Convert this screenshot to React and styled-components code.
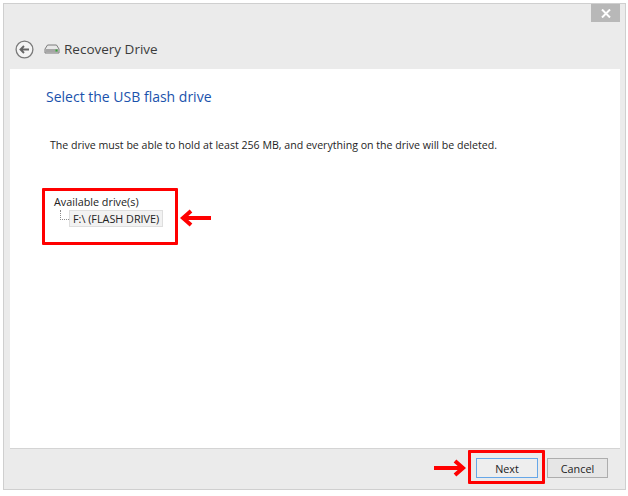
import React from "react";
import styled, { createGlobalStyle } from "styled-components";

const Global = createGlobalStyle`
  html, body { margin: 0; padding: 0; background: #fff; }
  body { width: 628px; height: 496px; overflow: hidden; font-family: "Open Sans", "Noto Sans", sans-serif; }
`;
const Page = styled.div`
  position: relative;
  width: 628px;
  height: 496px;
  padding: 3px 2px 6px 3px;
  box-sizing: border-box;
`;
const Window = styled.div`
  height: 100%;
  box-sizing: border-box;
  background: #ebebeb;
  border: 1px solid #cfcfcf;
  display: flex;
  flex-direction: column;
  padding: 0 5px 2px 6px;
`;
const TitleBar = styled.div`
  height: 19px;
  display: flex;
  justify-content: flex-end;
`;
const CloseButton = styled.div`
  width: 29px;
  height: 18px;
  background: #b8b8b8;
  display: flex;
  align-items: center;
  justify-content: center;
`;
const NavBar = styled.div`
  height: 46px;
  display: flex;
  align-items: center;
  gap: 10px;
  padding: 6px 0 0 5px;
  box-sizing: border-box;
`;
const AppTitle = styled.div`
  display: flex;
  align-items: center;
  gap: 4px;
  font-size: 13.5px;
  color: #3c3c3c;
`;
const Content = styled.div`
  flex: 1;
  background: #fff;
  padding: 18px 36px 0;
  box-sizing: border-box;
`;
const Heading = styled.h1`
  margin: 0 0 32px;
  font-size: 14px;
  line-height: 19px;
  font-weight: 400;
  color: #1a52ac;
`;
const Description = styled.p`
  margin: 0 0 41px 4px;
  font-size: 10.6px;
  line-height: 15px;
  color: #1e1e1e;
`;
const Tree = styled.div`
  margin-left: 8px;
  font-size: 10.8px;
  color: #222;
`;
const TreeLabel = styled.div`
  line-height: 16px;
`;
const TreeRow = styled.div`
  display: flex;
  align-items: flex-start;
`;
const TreeBranch = styled.span`
  width: 8px;
  height: 9px;
  margin-left: 6px;
  border-left: 1px dotted #8c8c8c;
  border-bottom: 1px dotted #8c8c8c;
`;
const TreeItem = styled.span`
  padding: 0 3px;
  line-height: 15px;
  background: #f2f2f2;
  border: 1px solid #dedede;
`;
const Footer = styled.div`
  height: 39px;
  box-sizing: border-box;
  border-top: 1px solid #d4d4d4;
  display: flex;
  justify-content: flex-end;
  align-items: center;
  gap: 9px;
  padding: 0 12px 0 0;
`;
const Button = styled.div`
  width: ${(p) => (p.$primary ? 62 : 61)}px;
  height: 20px;
  box-sizing: border-box;
  display: flex;
  align-items: center;
  justify-content: center;
  font-size: 10.8px;
  color: #222;
  background: ${(p) => (p.$primary ? "#eeeeee" : "#e6e6e6")};
  border: 1px solid ${(p) => (p.$primary ? "#66a7e8" : "#adadad")};
`;
const Callout = styled.div`
  position: absolute;
  left: ${(p) => p.$x}px;
  top: ${(p) => p.$y}px;
  width: ${(p) => p.$w}px;
  height: ${(p) => p.$h}px;
  box-sizing: border-box;
  border: 3px solid #f00;
  border-radius: 1px;
`;
const Arrow = styled.svg`
  position: absolute;
  left: ${(p) => p.$x}px;
  top: ${(p) => p.$y}px;
`;

const RedArrow = ({ x, y, left }) => (
  <Arrow $x={x} $y={y} width="33" height="18" viewBox="0 0 33 18">
    <path
      d={left ? "M31 9H3M11 2 3 9l8 7" : "M1 9h29M22 2 30 9l-8 7"}
      fill="none"
      stroke="#f00"
      strokeWidth="4"
    />
  </Arrow>
);

export default function App() {
  return (
    <Page>
      <Global />
      <Window>
        <TitleBar>
          <CloseButton>
            <svg width="10" height="9" viewBox="0 0 10 9">
              <path d="M1 .5 9 8.500M9 .5 1 8.500" stroke="#fff" strokeWidth="2" />
            </svg>
          </CloseButton>
        </TitleBar>
        <NavBar>
          <svg width="19" height="19" viewBox="0 0 19 19">
            <circle cx="9.500" cy="9.500" r="8.400" fill="#f4f4f4" stroke="#7b7b7b" strokeWidth="1.300" />
            <path d="M14 9.500H5.500M9 6 5.500 9.500 9 13" fill="none" stroke="#666" strokeWidth="1.900" />
          </svg>
          <AppTitle>
            <svg width="16" height="10" viewBox="0 0 16 10">
              <path d="M3.500 1h9L15 5v4H1V5z" fill="#e8e8e8" stroke="#6f6f6f" strokeWidth=".9" />
              <rect x="1.500" y="5" width="13" height="3.500" fill="#a6a6a6" />
              <rect x="11.500" y="5.500" width="2" height="2" fill="#35a835" />
            </svg>
            Recovery Drive
          </AppTitle>
        </NavBar>
        <Content>
          <Heading>Select the USB flash drive</Heading>
          <Description>
            The drive must be able to hold at least 256 MB, and everything on the drive will be deleted.
          </Description>
          <Tree>
            <TreeLabel>Available drive(s)</TreeLabel>
            <TreeRow>
              <TreeBranch />
              <TreeItem>F:\ (FLASH DRIVE)</TreeItem>
            </TreeRow>
          </Tree>
        </Content>
        <Footer>
          <Button $primary>Next</Button>
          <Button>Cancel</Button>
        </Footer>
      </Window>
      <Callout $x={42} $y={188} $w={136} $h={57} />
      <RedArrow x={180} y={209} left />
      <Callout $x={468} $y={450} $w={77} $h={34} />
      <RedArrow x={433} y={459} />
    </Page>
  );
}
